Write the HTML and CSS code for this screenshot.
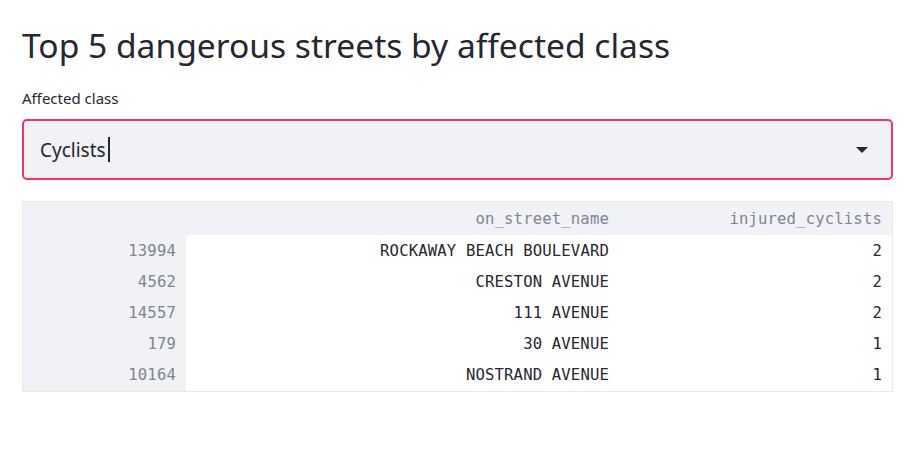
FILE: index.html
```html
<!DOCTYPE html>
<html>
<head>
<meta charset="utf-8">
<link rel="stylesheet" href="styles.css">
</head>
<body>
<main class="page">
  <h1 class="title">Top 5 dangerous streets by affected class</h1>
  <div class="field">
    <label class="label">Affected class</label>
    <div class="select">
      <span class="value">Cyclists</span><span class="caret"></span>
      <svg class="arrow" width="12" height="6" viewBox="0 0 12 6"><path d="M0 0h12L6 6z" fill="#262730"/></svg>
    </div>
  </div>
  <div class="table-wrap">
    <table class="df">
      <thead>
        <tr><th class="idx"></th><th class="c2">on_street_name</th><th class="c3">injured_cyclists</th></tr>
      </thead>
      <tbody>
        <tr><th class="idx">13994</th><td>ROCKAWAY BEACH BOULEVARD</td><td>2</td></tr>
        <tr><th class="idx">4562</th><td>CRESTON AVENUE</td><td>2</td></tr>
        <tr><th class="idx">14557</th><td>111 AVENUE</td><td>2</td></tr>
        <tr><th class="idx">179</th><td>30 AVENUE</td><td>1</td></tr>
        <tr><th class="idx">10164</th><td>NOSTRAND AVENUE</td><td>1</td></tr>
      </tbody>
    </table>
  </div>
</main>
</body>
</html>
```

FILE: styles.css
```css
html, body {
  margin: 0;
  padding: 0;
  background: #ffffff;
}
.page {
  padding: 22px 26px 0 22px;
  font-family: "Noto Sans", "Open Sans", sans-serif;
  color: #262730;
}
.title {
  margin: 0;
  font-size: 33.6px;
  font-weight: 400;
  line-height: 46px;
  color: #262730;
}
.field {
  margin-top: 21px;
}
.label {
  display: block;
  font-size: 15px;
  line-height: 19px;
  color: #262730;
}
.select {
  margin-top: 11px;
  height: 61px;
  box-sizing: border-box;
  border: 2.5px solid #f63366;
  border-radius: 5px;
  background: #f0f2f6;
  display: flex;
  align-items: center;
  padding: 0 23px 0 16px;
}
.value {
  font-size: 19px;
  color: #262730;
}
.caret {
  display: inline-block;
  width: 2px;
  height: 25px;
  background: #262730;
  margin-left: 2px;
}
.arrow {
  margin-left: auto;
}
.table-wrap {
  margin-top: 21px;
  border: 1px solid #e6e9ef;
}
.df {
  width: 100%;
  border-collapse: collapse;
  font-family: "DejaVu Sans Mono", "Liberation Mono", monospace;
  font-size: 15.6px;
  letter-spacing: 0.15px;
}
.df th, .df td {
  padding: 0 10px;
  text-align: right;
  font-weight: 400;
  white-space: nowrap;
}
.df thead th {
  height: 33px;
  background: #f0f2f6;
  color: #808495;
}
.df tbody tr {
  height: 31.2px;
}
.df td {
  color: #262730;
}
.df .idx {
  width: 143px;
  background: #f0f2f6;
  color: #808495;
}
.df .c2 {
  width: 413px;
}
```
